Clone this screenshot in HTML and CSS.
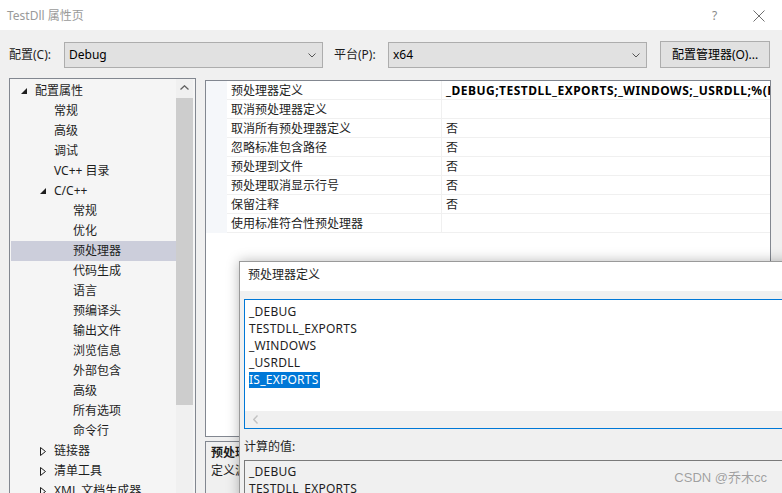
FILE: index.html
```html
<!DOCTYPE html>
<html lang="zh-CN">
<head>
<meta charset="utf-8">
<title>TestDll 属性页</title>
<link rel="stylesheet" href="styles.css">
</head>
<body>
<div class="window">
  <div class="titlebar">
    <span class="title">TestDll 属性页</span>
    <span class="help">?</span>
    <span class="close"><svg width="12" height="12" viewBox="0 0 12 12"><path d="M0.5 0.5 L11.5 11.5 M11.5 0.5 L0.5 11.5" stroke="#6f6f6f" stroke-width="1" fill="none"/></svg></span>
  </div>
  <div class="body">
    <div class="toolbar">
      <span class="lbl lbl-config">配置(C):</span>
      <div class="combo"><span class="combo-text">Debug</span><svg class="chev" width="8" height="5" viewBox="0 0 8 5"><path d="M0.5 0.5 L4 4 L7.5 0.5" stroke="#555" fill="none"/></svg></div>
      <span class="lbl lbl-platform">平台(P):</span>
      <div class="combo"><span class="combo-text">x64</span><svg class="chev" width="8" height="5" viewBox="0 0 8 5"><path d="M0.5 0.5 L4 4 L7.5 0.5" stroke="#555" fill="none"/></svg></div>
      <button class="btn">配置管理器(O)...</button>
    </div>
    <div class="content">
      <div class="tree">
        <ul class="tree-list">
          <li class="node l0"><span class="arrow"><svg width="6" height="6" viewBox="0 0 6 6"><path d="M6 0 L6 6 L0 6 Z" fill="#1e1e1e"/></svg></span>配置属性</li>
          <li class="node l1"><span class="arrow"></span>常规</li>
          <li class="node l1"><span class="arrow"></span>高级</li>
          <li class="node l1"><span class="arrow"></span>调试</li>
          <li class="node l1"><span class="arrow"></span>VC++ 目录</li>
          <li class="node l1"><span class="arrow"><svg width="6" height="6" viewBox="0 0 6 6"><path d="M6 0 L6 6 L0 6 Z" fill="#1e1e1e"/></svg></span>C/C++</li>
          <li class="node l2"><span class="arrow"></span>常规</li>
          <li class="node l2"><span class="arrow"></span>优化</li>
          <li class="node l2 selected"><span class="arrow"></span>预处理器</li>
          <li class="node l2"><span class="arrow"></span>代码生成</li>
          <li class="node l2"><span class="arrow"></span>语言</li>
          <li class="node l2"><span class="arrow"></span>预编译头</li>
          <li class="node l2"><span class="arrow"></span>输出文件</li>
          <li class="node l2"><span class="arrow"></span>浏览信息</li>
          <li class="node l2"><span class="arrow"></span>外部包含</li>
          <li class="node l2"><span class="arrow"></span>高级</li>
          <li class="node l2"><span class="arrow"></span>所有选项</li>
          <li class="node l2"><span class="arrow"></span>命令行</li>
          <li class="node l1"><span class="arrow"><svg width="6" height="9" viewBox="0 0 6 9"><path d="M0.5 0.5 L5.5 4.5 L0.5 8.5 Z" fill="none" stroke="#1e1e1e"/></svg></span>链接器</li>
          <li class="node l1"><span class="arrow"><svg width="6" height="9" viewBox="0 0 6 9"><path d="M0.5 0.5 L5.5 4.5 L0.5 8.5 Z" fill="none" stroke="#1e1e1e"/></svg></span>清单工具</li>
          <li class="node l1"><span class="arrow"><svg width="6" height="9" viewBox="0 0 6 9"><path d="M0.5 0.5 L5.5 4.5 L0.5 8.5 Z" fill="none" stroke="#1e1e1e"/></svg></span>XML 文档生成器</li>
        </ul>
        <div class="vscroll">
          <div class="sb-btn"><svg width="9" height="5" viewBox="0 0 9 5"><path d="M0.5 4.5 L4.5 0.8 L8.5 4.5" stroke="#606060" stroke-width="1.3" fill="none"/></svg></div>
          <div class="sb-thumb"></div>
          <div class="sb-track"></div>
          <div class="sb-btn"><svg width="9" height="5" viewBox="0 0 9 5"><path d="M0.5 0.5 L4.5 4.2 L8.5 0.5" stroke="#606060" stroke-width="1.3" fill="none"/></svg></div>
        </div>
      </div>
      <div class="rightpane">
        <div class="grid">
          <div class="grow"><div class="gutter"></div><div class="gname">预处理器定义</div><div class="gval bold">_DEBUG;TESTDLL_EXPORTS;_WINDOWS;_USRDLL;%(PreprocessorDefinitions)</div></div>
          <div class="grow"><div class="gutter"></div><div class="gname">取消预处理器定义</div><div class="gval"></div></div>
          <div class="grow"><div class="gutter"></div><div class="gname">取消所有预处理器定义</div><div class="gval">否</div></div>
          <div class="grow"><div class="gutter"></div><div class="gname">忽略标准包含路径</div><div class="gval">否</div></div>
          <div class="grow"><div class="gutter"></div><div class="gname">预处理到文件</div><div class="gval">否</div></div>
          <div class="grow"><div class="gutter"></div><div class="gname">预处理取消显示行号</div><div class="gval">否</div></div>
          <div class="grow"><div class="gutter"></div><div class="gname">保留注释</div><div class="gval">否</div></div>
          <div class="grow"><div class="gutter"></div><div class="gname">使用标准符合性预处理器</div><div class="gval"></div></div>
        </div>
        <div class="desc">
          <div class="desc-title">预处理器定义</div>
          <div class="desc-text">定义源文件的预处理符号。</div>
        </div>
      </div>
    </div>
    <div class="popup">
      <div class="popup-title">预处理器定义</div>
      <div class="popup-body">
        <div class="editbox">
          <div class="edit-lines">
            <div class="eline">_DEBUG</div>
            <div class="eline">TESTDLL_EXPORTS</div>
            <div class="eline">_WINDOWS</div>
            <div class="eline">_USRDLL</div>
            <div class="eline"><span class="sel">IS_EXPORTS</span></div>
          </div>
          <div class="hscroll"><svg width="5" height="9" viewBox="0 0 5 9"><path d="M4.5 0.5 L0.8 4.5 L4.5 8.5" stroke="#c2c2c2" stroke-width="1.4" fill="none"/></svg></div>
        </div>
        <div class="calc-label">计算的值:</div>
        <div class="calcbox">
          <div class="eline">_DEBUG</div>
          <div class="eline">TESTDLL_EXPORTS</div>
        </div>
      </div>
    </div>
    <div class="watermark">CSDN @乔木cc</div>
  </div>
</div>
</body>
</html>
```
FILE: styles.css
```css
* { box-sizing: border-box; }
html, body { margin: 0; padding: 0; }
body {
  width: 782px;
  height: 493px;
  overflow: hidden;
  font-family: "Noto Sans", "Noto Sans CJK SC", sans-serif;
  font-size: 12px;
  color: #1e1e1e;
  background: #f0f0f0;
}
.window { width: 782px; height: 493px; display: flex; flex-direction: column; }

.titlebar {
  height: 30px;
  background: #fff;
  display: flex;
  align-items: center;
  padding-left: 7px;
  flex: none;
}
.title { color: #9a9a9a; font-size: 12px; flex: 1; }
.help { color: #8a8a8a; font-size: 12px; width: 41px; }
.close { width: 29px; display: flex; align-items: center; margin-top: 1px; }

.body { position: relative; flex: 1; background: #f0f0f0; overflow: hidden; }

.toolbar {
  display: flex;
  align-items: center;
  height: 48px;
  padding: 1px 0 0 9px;
}
.lbl { line-height: 16px; }
.lbl-config { width: 55px; }
.lbl-platform { width: 54px; margin-left: 11px; }
.combo {
  width: 259px;
  height: 26px;
  background: #e1e1e1;
  border: 1px solid #adadad;
  display: flex;
  align-items: center;
  padding: 0 5px 0 4px;
}
.combo-text { flex: 1; color: #000; }
.chev { margin-right: 1px; margin-top: 1px; }
.btn {
  margin-left: 13px;
  width: 110px;
  height: 27px;
  background: #e1e1e1;
  border: 1px solid #adadad;
  font: inherit;
  color: #000;
  padding: 0;
  margin-top: -1px;
}

.content {
  display: flex;
  gap: 9px;
  padding-left: 9px;
  height: 420px;
}

.tree {
  width: 187px;
  height: 430px;
  border: 1px solid #828790;
  background: #f5f5f5;
  display: flex;
  padding: 1px 2px 0 1px;
  flex: none;
}
.tree-list {
  list-style: none;
  margin: 0;
  padding: 1px 0 0;
  width: 166px;
}
.node {
  height: 20px;
  display: flex;
  align-items: center;
  white-space: nowrap;
  line-height: 20px;
}
.node .arrow { width: 19px; display: flex; align-items: center; padding-left: 5px; flex: none; }
.l0 { padding-left: 5px; }
.l1 { padding-left: 24px; }
.l2 { padding-left: 43px; }
.selected { background: #cccedb; }

.vscroll {
  width: 17px;
  background: #f0f0f0;
  display: flex;
  flex-direction: column;
  flex: none;
  margin-top: -1px;
}
.sb-btn { height: 17px; display: flex; align-items: center; justify-content: center; }
.sb-thumb { height: 307px; background: #cdcdcd; margin-top: 2px; }
.sb-track { flex: 1; }

.rightpane { display: flex; flex-direction: column; gap: 4px; margin-top: 2px; }
.grid {
  width: 566px;
  height: 357px;
  border: 1px solid #828790;
  background: #fff;
  overflow: hidden;
  flex: none;
}
.grow {
  height: 19px;
  display: flex;
  white-space: nowrap;
}
.gutter { width: 21px; background: #f5f7fa; flex: none; }
.gname {
  width: 215px;
  padding-left: 4px;
  padding-top: 1px;
  border-bottom: 1px solid #f0f0f0;
  border-right: 1px solid #f0f0f0;
  line-height: 18px;
  flex: none;
}
.gval {
  flex: 1;
  padding-left: 4px;
  padding-top: 1px;
  border-bottom: 1px solid #f0f0f0;
  line-height: 18px;
  overflow: hidden;
}
.bold { font-weight: bold; color: #000; letter-spacing: 0.5px; }

.desc {
  width: 566px;
  height: 80px;
  border: 1px solid #828790;
  border-right: none;
  padding: 2px 5px;
  flex: none;
}
.desc-title { font-weight: bold; line-height: 18px; }
.desc-text { line-height: 18px; }

.popup {
  position: absolute;
  left: 239px;
  top: 231px;
  width: 560px;
  height: 240px;
  border: 1px solid #9a9a9a;
  background: #f0f0f0;
  box-shadow: 0 0 12px rgba(0, 0, 0, 0.28);
}
.popup-title {
  height: 29px;
  background: #fff;
  padding-left: 8px;
  line-height: 25px;
}
.popup-body { padding: 8px 0 0 4px; }
.editbox {
  height: 130px;
  border: 1px solid #0078d7;
  border-right: none;
  background: #fff;
  display: flex;
  flex-direction: column;
}
.edit-lines { flex: 1; padding: 3px 0 0 4px; }
.eline { height: 17px; line-height: 17px; white-space: nowrap; letter-spacing: 0.25px; }
.sel { background: #0078d7; color: #fff; display: inline-block; line-height: 16px; padding-right: 1px; }
.hscroll {
  height: 17px;
  background: #f0f0f0;
  display: flex;
  align-items: center;
  padding-left: 8px;
}
.calc-label { line-height: 17px; margin-top: 9px; }
.calcbox {
  margin-top: 5px;
  height: 60px;
  border-top: 1px solid #7a7a7a;
  border-left: 1px solid #7a7a7a;
  background: #f0f0f0;
  padding: 2px 0 0 4px;
}

.watermark {
  position: absolute;
  right: 15px;
  top: 437px;
  color: #a0a0a0;
  font-family: "Liberation Sans", "Noto Sans CJK SC", sans-serif;
  font-size: 13px;
  text-shadow: 0 0 1px #fff;
}
```
